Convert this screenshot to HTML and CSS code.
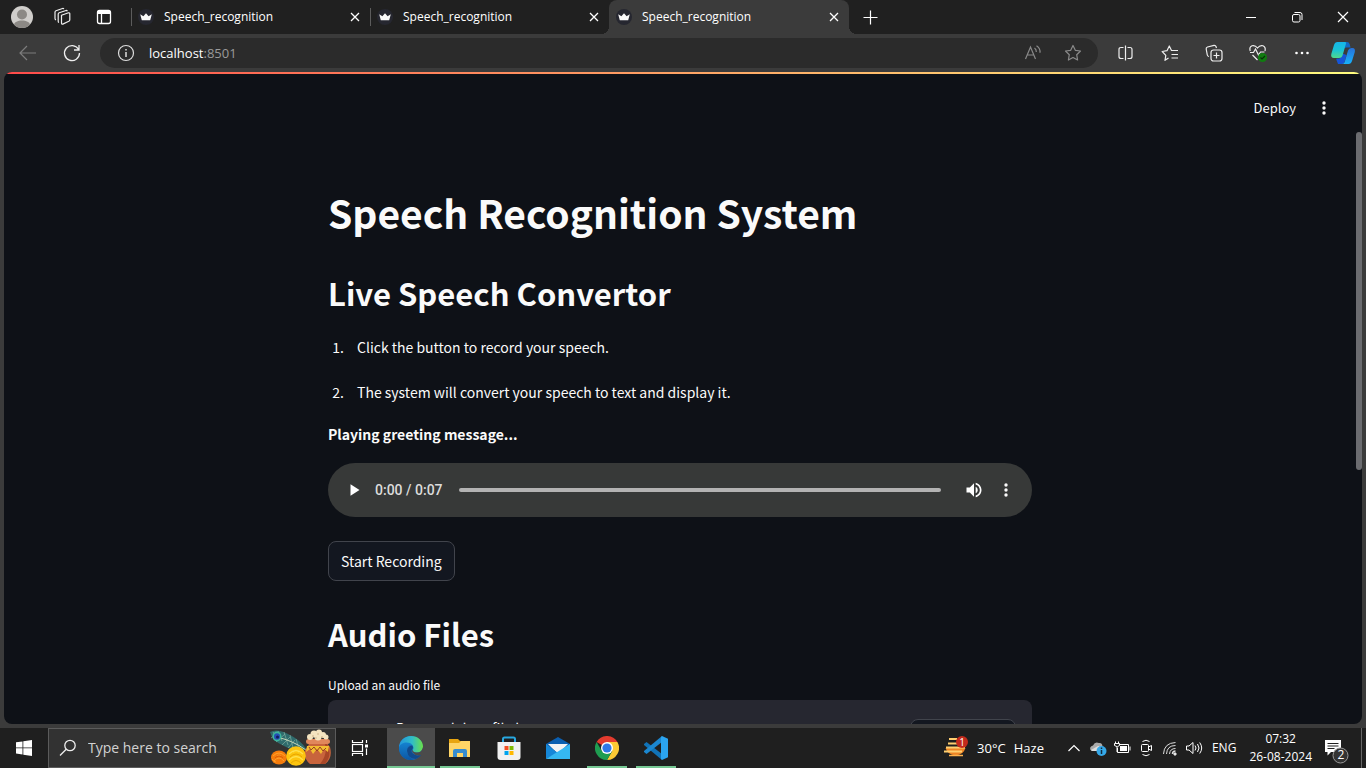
FILE: index.html
```html
<!DOCTYPE html>
<html lang="en">
<head>
<meta charset="utf-8">
<title>Speech_recognition</title>
<link rel="stylesheet" href="styles.css">
</head>
<body>
<svg class="defs" aria-hidden="true">
  <symbol id="crown" viewBox="0 0 16 16"><circle cx="8" cy="8" r="8" fill="#262730"/><path d="M2.200 5.200 5.400 7.200 8 4.200l2.600 3 3.200-2-1.600 6H3.800z" fill="#fafafa"/></symbol>
  <symbol id="close" viewBox="0 0 16 16"><path d="M4 4l8 8M12 4l-8 8" stroke="currentColor" stroke-width="1.300" fill="none"/></symbol>
  <symbol id="dots-v" viewBox="0 0 16 16"><g fill="currentColor"><circle cx="8" cy="3" r="1.700"/><circle cx="8" cy="8" r="1.700"/><circle cx="8" cy="13" r="1.700"/></g></symbol>
</svg>

<header class="tab-strip">
  <div class="strip-tools">
    <button class="strip-btn" aria-label="Profile"><svg width="22" height="22" viewBox="0 0 22 22"><defs><clipPath id="av"><circle cx="11" cy="11" r="11"/></clipPath></defs><g clip-path="url(#av)"><path fill="#d0cecb" d="M0 0h22v22H0z"/><circle cx="11" cy="8.500" r="5" fill="#8c8985"/><path fill="#8c8985" d="M3 22v-3c0-3 4-4.500 8-4.500s8 1.500 8 4.500v3z"/></g></svg></button>
    <button class="strip-btn" aria-label="Workspaces"><svg width="20" height="20" viewBox="0 0 20 20" fill="none" stroke="#eee" stroke-width="1.200" stroke-linejoin="round"><path d="M8.500 8.300l7-2.500q1.300-.3 1.300 1v6q0 1-1 1.500l-6 2.800q-1.300.4-1.300-1z"/><path d="M6 15.500q-.8-.3-.8-1.300V7.200q0-1 1-1.400L13 3.500q1-.2 1.300.7M3 13q-1-.4-1-1.400V5.200q0-1 1-1.400L9.500 1.500q1-.2 1.300.6"/></svg></button>
    <button class="strip-btn" aria-label="Tab actions"><svg width="20" height="20" viewBox="0 0 20 20" fill="none" stroke="#fff" stroke-width="1.300"><rect x="3.500" y="3.500" width="13" height="13" rx="2"/><path d="M4 5.500h12" stroke-width="3"/><path d="M7.500 6v10"/></svg></button>
  </div>
  <nav class="tabs" aria-label="Tabs">
    <div class="tab"><svg class="fav"><use href="#crown"/></svg><span class="tab-title">Speech_recognition</span><button class="tab-close" aria-label="Close tab"><svg><use href="#close"/></svg></button></div>
    <div class="tab"><svg class="fav"><use href="#crown"/></svg><span class="tab-title">Speech_recognition</span><button class="tab-close" aria-label="Close tab"><svg><use href="#close"/></svg></button></div>
    <div class="tab active"><svg class="fav"><use href="#crown"/></svg><span class="tab-title">Speech_recognition</span><button class="tab-close" aria-label="Close tab"><svg><use href="#close"/></svg></button></div>
    <button class="tool" aria-label="New tab"><svg width="16" height="16" viewBox="0 0 16 16"><path d="M7.500 1.500v14M.5 8.500h14" stroke="#fff" stroke-width="1.200"/></svg></button>
  </nav>
  <div class="window-controls">
    <button aria-label="Minimize"><svg width="12" height="12" viewBox="0 0 12 12"><path d="M1 6.500h10" stroke="#fff"/></svg></button>
    <button aria-label="Restore"><svg width="12" height="12" viewBox="0 0 12 12" fill="none" stroke="#fff"><rect x="1.500" y="3.500" width="7.500" height="7.500" rx="1.500"/><path d="M3.500 1.500H9q2 0 2 2V9"/></svg></button>
    <button aria-label="Close"><svg width="12" height="12" viewBox="0 0 12 12"><path d="M1 1l10 10M11 1L1 11" stroke="#fff" stroke-width="1.200"/></svg></button>
  </div>
</header>

<div class="toolbar">
  <button class="tool" aria-label="Back"><svg width="20" height="20" viewBox="0 0 20 20" fill="none" stroke="#7d7d7d" stroke-width="1.200"><path d="M18 10H2.500M9 3l-7 7 7 7"/></svg></button>
  <button class="tool" aria-label="Refresh"><svg width="20" height="20" viewBox="0 0 20 20" fill="none" stroke="#eee" stroke-width="1.300"><path d="M16.500 6.300A7.500 7.500 0 1 0 17.500 10M17 2v5h-5"/></svg></button>
  <div class="address">
    <button class="site-info" aria-label="Site information"><svg width="18" height="18" viewBox="0 0 18 18" fill="none" stroke="#ddd" stroke-width="1.200"><circle cx="9" cy="9" r="7.500"/><path d="M9 8v5M9 5v1.500" stroke-width="1.500"/></svg></button>
    <span class="url"><span class="host">localhost</span>:8501</span>
    <button class="addr-btn" aria-label="Read aloud"><svg width="18" height="18" viewBox="0 0 18 18" fill="none" stroke="#8a8a8a" stroke-width="1.200"><path d="M1.500 15L6.500 3l5 12M3.200 11h6.600M10.500 4q2 1.500 1.800 4M12.500 1.800q4 2.700 3.500 7"/></svg></button>
    <button class="addr-btn" aria-label="Add to favorites"><svg width="18" height="18" viewBox="0 0 18 18" fill="none" stroke="#8a8a8a" stroke-width="1.200" stroke-linejoin="round"><path d="M9 1.500l2.300 4.800 5.200.7-3.800 3.700.9 5.300L9 13.500 4.400 16l.9-5.300L1.500 7l5.200-.7z"/></svg></button>
  </div>
  <button class="tool first-action" aria-label="Split screen"><svg width="18" height="18" viewBox="0 0 18 18" fill="none" stroke="#eee" stroke-width="1.200"><path d="M6.500 3.500H4q-2 0-2 2v7q0 2 2 2h2.500M10.500 3.500H13q2 0 2 2v7q0 2-2 2h-2.500M8.500 1.500v15"/></svg></button>
  <button class="tool" aria-label="Favorites"><svg width="18" height="18" viewBox="0 0 18 18" fill="none" stroke="#eee" stroke-width="1.200" stroke-linejoin="round"><path d="M7.500 14L4 16.300l.8-5L1.200 7.500l4.800-.8L8.300 2l2.200 4.500H17M10.500 10.500H17M10.500 14H17"/></svg></button>
  <button class="tool" aria-label="Collections"><svg width="18" height="18" viewBox="0 0 18 18" fill="none" stroke="#eee" stroke-width="1.200"><path d="M4 12.500q-1.500-.3-1.700-1.500L1.200 5q-.2-1.500 1.300-2l6.500-1.600q1.500-.2 2 1.100l.5 1.500"/><rect x="6" y="6" width="11" height="11" rx="2.500"/><path d="M11.500 8.500v6M8.500 11.500h6"/></svg></button>
  <button class="tool" aria-label="Browser essentials"><svg width="20" height="20" viewBox="0 0 20 20" fill="none" stroke="#eee" stroke-width="1.200"><path d="M2.200 8Q1 4 4 2.800 7 1.800 9.500 5q2.500-3.200 5.500-2.200 3 1.200 2 5.200M2 9.500h3.500l2-3.500 3 6 2-3h4M4.500 12l5 5"/><circle cx="14.500" cy="14.500" r="4.500" fill="#107c10" stroke="none"/><path d="M12.500 14.500l1.500 1.500 3-3" stroke="#082f08"/></svg></button>
  <button class="tool" aria-label="Settings and more"><svg width="16" height="16" viewBox="0 0 16 16" fill="#fff"><circle cx="2.500" cy="8" r="1.300"/><circle cx="8" cy="8" r="1.300"/><circle cx="13.500" cy="8" r="1.300"/></svg></button>
  <button class="copilot" aria-label="Copilot"><svg width="26" height="26" viewBox="0 0 26 26"><defs><linearGradient id="cp1" x2="0" y2="1"><stop stop-color="#16b5e9"/><stop offset=".5" stop-color="#19c3d6"/><stop offset="1" stop-color="#51d98b"/></linearGradient><linearGradient id="cp2" x2="0" y2="1"><stop stop-color="#2870d8"/><stop offset="1" stop-color="#17b2fb"/></linearGradient></defs><path d="M13 2h4q2 0 2.600 2l1 3.500h-4.500q-2 0-2.600 2z" fill="#1269c4"/><path d="M8 24h4q2 0 2.500-2l2-7-4-1.500-3 5H7q-1 0-.7 1z" fill="#1555d8"/><path d="M7.500 2H15q1.500 0 1 1.500L12.700 15q-.8 3-3.700 3H4q-3.500 0-2.700-4L4 5q.9-3 3.500-3z" fill="url(#cp1)"/><path d="M18.500 24H12q2 0 2.700-2L18 10.500q.7-2.500 3.500-2.500h1q3 0 2.300 4L22 21q-.9 3-3.500 3z" fill="url(#cp2)"/></svg></button>
</div>

<div class="viewport">
  <div class="app">
    <div class="app-header">
      <button class="deploy">Deploy</button>
      <button class="app-menu" aria-label="Main menu"><svg width="16" height="16"><use href="#dots-v"/></svg></button>
    </div>
    <div class="app-scroll">
      <main class="content">
        <h1>Speech Recognition System</h1>
        <h2>Live Speech Convertor</h2>
        <ol>
          <li>Click the button to record your speech.</li>
          <li>The system will convert your speech to text and display it.</li>
        </ol>
        <p class="greeting">Playing greeting message...</p>
        <div class="player" role="group" aria-label="Audio player">
          <button aria-label="Play"><svg width="20" height="20" viewBox="0 0 20 20"><path d="M6.500 4.300v11.400l9-5.700z" fill="#fff"/></svg></button>
          <span class="time">0:00 / 0:07</span>
          <input type="range" class="seek" min="0" max="7" value="0" aria-label="Seek">
          <button aria-label="Mute"><svg width="20" height="20" viewBox="0 0 24 24" fill="#fff"><path d="M3 9v6h4l5 5V4L7 9H3zm13.500 3A4.500 4.500 0 0 0 14 7.970v8.050c1.480-.73 2.500-2.250 2.500-4.020zM14 3.230v2.060c2.890.86 5 3.540 5 6.710s-2.110 5.850-5 6.710v2.060c4.010-.91 7-4.490 7-8.770s-2.990-7.860-7-8.770z"/></svg></button>
          <button aria-label="More options"><svg width="16" height="16"><use href="#dots-v"/></svg></button>
        </div>
        <button class="btn record">Start Recording</button>
        <h2>Audio Files</h2>
        <label class="upload-label" for="upload">Upload an audio file</label>
        <section class="uploader">
          <span class="drop-hint">Drag and drop file here</span>
          <button class="btn browse" id="upload" aria-label="Browse files"></button>
        </section>
      </main>
    </div>
    <div class="scroll-thumb"></div>
  </div>
</div>

<footer class="taskbar">
  <button class="start" aria-label="Start"><svg width="16" height="16" viewBox="0 0 16 16" fill="#fff"><path d="M0 2.300L6.500 1.400v6.100H0zM7.300 1.300L16 0v7.500H7.300zM0 8.300h6.500v6.200L0 13.600zM7.300 8.300H16V16l-8.700-1.300z"/></svg></button>
  <div class="search">
    <svg width="18" height="18" viewBox="0 0 18 18" fill="none" stroke="#eee" stroke-width="1.300"><circle cx="11" cy="6.500" r="5.200"/><path d="M7.200 10.300L1 16.500"/></svg>
    <input type="text" placeholder="Type here to search" aria-label="Type here to search">
    <svg class="art" width="64" height="38" viewBox="0 0 64 38">
      <path d="M2 3Q9-1 20 5q13 6 19 16-15 1-23-4Q4 12 2 3z" fill="#2f6b6c"/>
      <path d="M5 3l5 8M10 2l4 10M16 3l4 13M22 6l3 13M28 10l3 10M3 9l8-5M8 13l9-8M14 16l8-8M20 19l7-8" stroke="#7fae9f" stroke-width=".7"/>
      <path d="M8 8q16 3 30 13" stroke="#c6d7b8" fill="none"/>
      <ellipse cx="9" cy="7.500" rx="4.500" ry="5" fill="#3cb59d"/><ellipse cx="9" cy="7.500" rx="3" ry="3.300" fill="#2450b4"/><circle cx="9.500" cy="8" r="1.500" fill="#111c5b"/>
      <path d="M42 11h16q1 4 4 7 3 11-5 17H42q-7-6-5-14 4-4 5-10z" fill="#c8643c"/>
      <path d="M57 12q9 12 0 23h-5q9-11 4-23z" fill="#a84627"/>
      <rect x="38" y="10" width="24" height="5" rx="2.500" fill="#e1875b"/>
      <path d="M39 17h22l-1 6-4-3-3 5-4-5-4 5-3-5-4 3z" fill="#f3bd31"/><path d="M41 18l2 3 3-3 3 4 3-4 3 4 3-3" stroke="#983e22" fill="none"/>
      <g fill="#f4e4c0"><circle cx="42" cy="8" r="3"/><circle cx="46" cy="5" r="3.500"/><circle cx="51" cy="3.500" r="3"/><circle cx="55" cy="6" r="3"/><circle cx="58" cy="8" r="2.500"/><circle cx="50" cy="8" r="3.500"/></g>
      <g fill="#c8ae82"><circle cx="45" cy="7" r=".8"/><circle cx="50" cy="5" r=".8"/><circle cx="54" cy="8" r=".8"/><circle cx="48" cy="9" r=".7"/></g>
      <ellipse cx="11" cy="28.500" rx="8" ry="7" fill="#f57c0c"/><path d="M5 27q6-6 12 0M6 32q5-6 10 0M9 27q2-2 4 0M4 30q2 3 4 3" fill="none" stroke="#ffa12b"/><path d="M7 29q4-4 8 0" fill="none" stroke="#d85c06"/>
      <circle cx="28" cy="27" r="9.800" fill="#fdc50f"/><path d="M21 25q7-7 14 0M21 31q7-7 14 0M25 23q3-3 6 0" fill="none" stroke="#ffe04d" stroke-width="1.200"/><path d="M22 28q6-6 12 0M23 34q5-5 10 0" fill="none" stroke="#e9a500"/>
    </svg>
  </div>
  <button class="start" aria-label="Task view"><svg width="18" height="18" viewBox="0 0 18 18" fill="none" stroke="#fff" stroke-width="1.200"><rect x="1.500" y="5.500" width="10" height="7"/><path d="M1.500 1v2.500h10V1M1.500 17v-2.500h10V17M15.500 1v3M15.500 9.500V16"/><path d="M14 5.500h3v3h-3z" fill="#fff" stroke="none"/></svg></button>
  <div class="apps">
    <button class="app-btn open current" aria-label="Edge"><svg width="24" height="24" viewBox="0 0 24 24"><defs><linearGradient id="e1"><stop stop-color="#2295dd"/><stop offset=".55" stop-color="#31bdc6"/><stop offset="1" stop-color="#6be148"/></linearGradient><linearGradient id="e2" x2="0" y2="1"><stop stop-color="#1482d0"/><stop offset="1" stop-color="#0c57a4"/></linearGradient></defs><circle cx="12" cy="12" r="12" fill="#176fbe"/><path d="M0 12C0 5 5 0 12 0s12 5 12 10.500c0 4-3 6-6.500 6-4 0-4.500-1.500-3.500-3 1.500-2.500-.5-5.500-5-5.500C4 8 .5 10 0 12z" fill="url(#e1)"/><path d="M0 12c0-3 3.500-5.500 7.500-5.500 3 0 5 1 6 2.500C9 8 7 12 8 16c1 4 4 6.500 7 7.500C6 26 0 19 0 12z" fill="url(#e2)"/><path d="M13.500 9.500Q8 10 8 15q1 8 9 8 3-1 5.500-4.500-5 2-8-.5-3-2-1.500-4.500 1.500-2 .5-4z" fill="#114a8c"/><path d="M24 11v8h-1.500q-6 1.500-9-2.500-1-1.500.2-3 0 3 4 3Q23 16.500 24 11z" fill="#4b4b4b"/></svg></button>
    <button class="app-btn open" aria-label="File Explorer"><svg width="24" height="24" viewBox="0 0 24 24"><path d="M1 3h9l2 2h10v5H1z" fill="#e8a510"/><path d="M1 7h10l2-2h9v16H1z" fill="#ffd566"/><path d="M5 21v-6q0-2 2-2h10q2 0 2 2v6h-4v-4H9v4z" fill="#368ccf"/></svg></button>
    <button class="app-btn" aria-label="Microsoft Store"><svg width="24" height="24" viewBox="0 0 24 24"><path d="M6 7V3q0-1.500 1.500-1.500h9Q18 1.500 18 3v4" fill="none" stroke="#28a8e0" stroke-width="2"/><path d="M.5 6h23v15q0 3-3 3h-17q-3 0-3-3z" fill="#f1f1f1"/><path d="M7.500 10h4v4h-4z" fill="#f25022"/><path d="M12.500 10h4v4h-4z" fill="#7fba00"/><path d="M7.500 15h4v4h-4z" fill="#00a4ef"/><path d="M12.500 15h4v4h-4z" fill="#ffb900"/></svg></button>
    <button class="app-btn" aria-label="Mail"><svg width="24" height="24" viewBox="0 0 24 24"><path d="M0 8l12-7 12 7v6H0z" fill="#0b5fb0"/><path d="M2 8h20L12 18z" fill="#f3f3f3"/><path d="M0 8l12 9-12 6z" fill="#1687d8"/><path d="M24 8v15H0z" fill="#35b7f1"/></svg></button>
    <button class="app-btn open" aria-label="Chrome"><svg width="24" height="24" viewBox="0 0 24 24"><path d="M12 12L1.600 6A12 12 0 0 1 22.400 6z" fill="#e33b2e"/><path d="M12 12V6h10.400A12 12 0 0 1 12 24l5.200-9z" fill="#fcc934"/><path d="M1.600 6A12 12 0 0 0 12 24l5.200-9-5.200 3-5.200-3z" fill="#1f9d51"/><circle cx="12" cy="12" r="6" fill="#fff"/><circle cx="12" cy="12" r="4.600" fill="#2f78e8"/></svg></button>
    <button class="app-btn open" aria-label="Visual Studio Code"><svg width="24" height="24" viewBox="0 0 24 24"><path d="M0 8l2.500-2L18 18v6L0 9z" fill="#1173b7"/><path d="M0 16l2.500 2L18 6V0L0 15z" fill="#1b87d0"/><path d="M18 0l6 2.700v18.600L18 24l-1-1.200V1.200z" fill="#2ba4ef"/></svg></button>
  </div>
  <button class="weather"><svg width="26" height="26" viewBox="0 0 26 26"><path d="M2.500 13h20a10.500 10.500 0 0 1-20 0z" fill="#ee8424"/><path d="M6 4h8M5 8.500h9M3 12.500h19M1 16.500h18" stroke="#ffcf70" stroke-width="2"/><path d="M6 20.500h14" stroke="#ffb24d" stroke-width="1.500"/><circle cx="19" cy="7" r="6" fill="#c42b1c"/></svg><span class="badge">1</span><span>30°C</span><span>Haze</span></button>
  <div class="tray">
    <button aria-label="Show hidden icons"><svg width="14" height="14" viewBox="0 0 14 14"><path d="M1.500 10L7 4.500l5.500 5.500" fill="none" stroke="#fff" stroke-width="1.200"/></svg></button>
    <button aria-label="OneDrive"><svg width="18" height="18" viewBox="0 0 18 18"><path d="M1.500 11Q0 7.500 4 6.500 6 2 10 4q3-.5 3.500 3l-3 5H3z" fill="#aaa"/><path d="M2 11l7-4 5 1-3 4H3z" fill="#ddd"/><circle cx="12.500" cy="12" r="5" fill="#35a8e8"/><path d="M12.500 11v4M12.500 8.500v1.500" stroke="#102c40" stroke-width="1.500"/></svg></button>
    <button aria-label="Battery"><svg width="18" height="18" viewBox="0 0 18 18" fill="none" stroke="#fff"><path d="M4.500 9v4.500h11v-8H7M17 7.500v4M2.500 2.500v2M5.500 2.500v2M1.500 4.500h5v2q-2 2.500-5 0zM4 8v5"/><path d="M7 7h7v5H7z" fill="#fff" stroke="none"/></svg></button>
    <button aria-label="Meet now"><svg width="18" height="18" viewBox="0 0 18 18" fill="none" stroke="#fff"><path d="M5.500 2.500Q9 0 12.500 2.500M5.500 15.500q3.500 2.500 7 0M11.500 8l3-1.500v5l-3-1.500"/><rect x="4.500" y="5.500" width="7" height="7" rx="1"/></svg></button>
    <button aria-label="Network"><svg width="18" height="18" viewBox="0 0 18 18" fill="none" stroke="#ddd"><path d="M2.500 15Q3 4 14.500 3.500M5.500 15q.5-8.500 9-8.500M8.500 15q.5-5.500 6-5.500"/><path d="M11.500 15q0-3 3-3" stroke-width="1.500"/><circle cx="14" cy="15" r="1.200" fill="#fff"/></svg></button>
    <button aria-label="Volume"><svg width="18" height="18" viewBox="0 0 18 18" fill="none" stroke="#fff"><path d="M1.500 7H4l4-3.500v11L4 11H1.500zM10 6.500q2 2.500 0 5M12.500 5q3 4 0 8M14.700 3.500q4 5.500 0 11"/></svg></button>
  </div>
  <span class="lang">ENG</span>
  <div class="clock"><span>07:32</span><span>26-08-2024</span></div>
  <button class="notify" aria-label="Notifications"><svg width="26" height="26" viewBox="0 0 26 26"><path d="M1 2h16v12H7l-3.500 3.500V14H1z" fill="#fff"/><path d="M3.500 5.500h11M3.500 8h11M3.500 10.500h7" stroke="#222"/><circle cx="16.500" cy="17.500" r="7.500" fill="#333" stroke="#999"/></svg><span class="count">2</span></button>
</footer>
</body>
</html>
```
FILE: styles.css
```css
* { box-sizing: border-box; }

body {
  margin: 0;
  height: 100vh;
  display: flex;
  flex-direction: column;
  overflow: hidden;
  background: #3b3b3b;
  color: #fff;
  font: 12px/16px "Open Sans", "Noto Sans", sans-serif;
}

button {
  border: 0;
  padding: 0;
  background: none;
  color: inherit;
  font: inherit;
  display: flex;
  align-items: center;
  justify-content: center;
}

svg { display: block; flex: none; }
.defs { position: absolute; width: 0; height: 0; }

/* Tab strip */
.tab-strip { flex: none; display: flex; height: 34px; background: #202020; }
.strip-tools { display: flex; gap: 1px; padding: 0 7px 0 2px; }
.strip-btn { width: 40px; }
.tabs { flex: 1; display: flex; min-width: 0; }
.tab {
  width: 239px;
  display: flex;
  align-items: center;
  padding: 0 7px;
  position: relative;
}
.tab:not(.active)::before {
  content: "";
  position: absolute;
  left: 0;
  top: 8px;
  height: 18px;
  width: 1px;
  background: #5c5c5c;
}
.tab.active { width: 240px; background: #3b3b3b; border-radius: 8px 8px 0 0; }
.tab.active::before,
.tab.active::after {
  content: "";
  position: absolute;
  bottom: 0;
  width: 8px;
  height: 8px;
}
.tab.active::before { left: -8px; background: radial-gradient(circle at 0 0, #202020 8px, #3b3b3b 8px); }
.tab.active::after { right: -8px; background: radial-gradient(circle at 100% 0, #202020 8px, #3b3b3b 8px); }
.fav { width: 16px; height: 16px; }
.tab-title { flex: 1; padding-left: 10px; }
.tab-close svg { width: 16px; height: 16px; }
.window-controls { display: flex; }
.window-controls button { width: 46px; }

/* Toolbar */
.toolbar { flex: none; height: 38px; display: flex; align-items: center; padding: 0 4px 0 6px; }
.tool { width: 44px; height: 34px; flex: none; }
.address {
  flex: 1;
  margin: 0 0 0 6px;
  height: 30px;
  border-radius: 15px;
  background: #2b2b2b;
  display: flex;
  align-items: center;
  padding: 0 5px 0 17px;
}
.url { flex: 1; padding-left: 14px; font-size: 13px; color: #9a9a9a; }
.host { color: #fff; }
.addr-btn { width: 40px; }
.first-action { margin-left: 6px; }
.copilot { width: 38px; }

/* Streamlit page */
.viewport { flex: 1; min-height: 0; padding: 0 4px 4px; }
.app {
  height: 100%;
  position: relative;
  display: flex;
  flex-direction: column;
  overflow: hidden;
  border-radius: 8px;
  background: #0e1117;
  color: #fafafa;
  font-family: "Noto Sans CJK JP", "Noto Sans", sans-serif;
}
.app::before {
  content: "";
  position: absolute;
  inset: 0 0 auto;
  height: 2px;
  background: linear-gradient(90deg, #ff4b4b, #fffd80);
}
.app-header {
  flex: none;
  height: 60px;
  display: flex;
  justify-content: flex-end;
  align-items: center;
  gap: 20px;
  padding: 12px 30px 0;
}
.deploy { font-size: 13px; line-height: 20px; }
.app-scroll { flex: 1; min-height: 0; overflow: hidden; padding-right: 6px; }
.scroll-thumb {
  position: absolute;
  right: 0;
  top: 60px;
  width: 6px;
  height: 338px;
  border-radius: 3px;
  background: #6b6c70;
}
.content { width: 704px; max-width: 100%; margin: 0 auto; padding-top: 54px; font-size: 14px; line-height: 26px; }
h1 { margin: 0; padding-bottom: 2px; font-size: 39px; line-height: 52px; font-weight: 700; }
h2 { margin: 32px 0 0; font-size: 31px; line-height: 42px; font-weight: 700; }
ol { margin: 20px 0 0; padding-left: 19px; display: grid; gap: 19px; }
li { padding-left: 10px; }
.greeting { margin: 16px 0; font-weight: 700; }
.player {
  height: 54px;
  border-radius: 27px;
  background: #373938;
  display: flex;
  align-items: center;
  padding: 0 10px;
}
.player button { width: 32px; height: 32px; }
.time { padding: 0 16px 0 5px; font: 500 14px/20px Roboto, sans-serif; color: #dcdcdc; }
.seek { flex: 1; min-width: 0; height: 4px; margin: 0 17px 0 0; appearance: none; border-radius: 2px; background: #b3b3b3; }
.seek::-webkit-slider-thumb { appearance: none; width: 0; height: 0; }
.btn {
  height: 40px;
  padding: 0 12px;
  border: 1px solid #41444c;
  border-radius: 8px;
  background: #131720;
}
.record { margin-top: 24px; }
.upload-label { display: block; margin-top: 19px; font-size: 12px; line-height: 22px; }
.uploader {
  margin-top: 4px;
  min-height: 78px;
  padding: 0 16px 0 68px;
  border-radius: 8px 8px 0 0;
  background: #262730;
  display: flex;
  align-items: flex-start;
  justify-content: space-between;
}
.drop-hint { padding-top: 15px; }
.browse { width: 106px; margin-top: 19px; }

/* Taskbar */
.taskbar { flex: none; height: 40px; display: flex; background: #1f1f1f; font-size: 13px; }
.start { width: 48px; }
.search {
  width: 288px;
  display: flex;
  align-items: center;
  padding: 0 3px 0 10px;
  border: 1px solid #5b5b5b;
  background: #323232;
}
.search input {
  flex: 1;
  min-width: 0;
  padding: 0 0 0 11px;
  border: 0;
  background: none;
  color: #fff;
  font: 14px/20px "Open Sans", "Noto Sans", sans-serif;
}
.search input::placeholder { color: #d2d2d2; opacity: 1; }
.apps { flex: 1; display: flex; gap: 1px; padding-left: 3px; }
.app-btn { width: 48px; position: relative; }
.current { background: #4b4b4b; }
.open::after {
  content: "";
  position: absolute;
  inset: auto 4px 0;
  height: 2px;
  background: #76c893;
}
.current::after { inset: auto 0 0; }
.weather { position: relative; gap: 8px; padding-right: 18px; }
.badge {
  position: absolute;
  left: 14px;
  top: 8px;
  width: 10px;
  text-align: center;
  font-size: 10px;
  line-height: 12px;
}
.tray { display: flex; }
.tray button { width: 24px; }
.lang { padding: 0 13px 0 6px; font-size: 12px; line-height: 40px; }
.clock { display: flex; flex-direction: column; justify-content: center; text-align: center; font-size: 12px; line-height: 18px; }
.notify { position: relative; width: 50px; margin-right: 4px; border-right: 1px solid #666; }
.notify svg { margin-top: 5px; }
.count { position: absolute; left: 24px; top: 19px; width: 10px; text-align: center; font-size: 12px; }
```
